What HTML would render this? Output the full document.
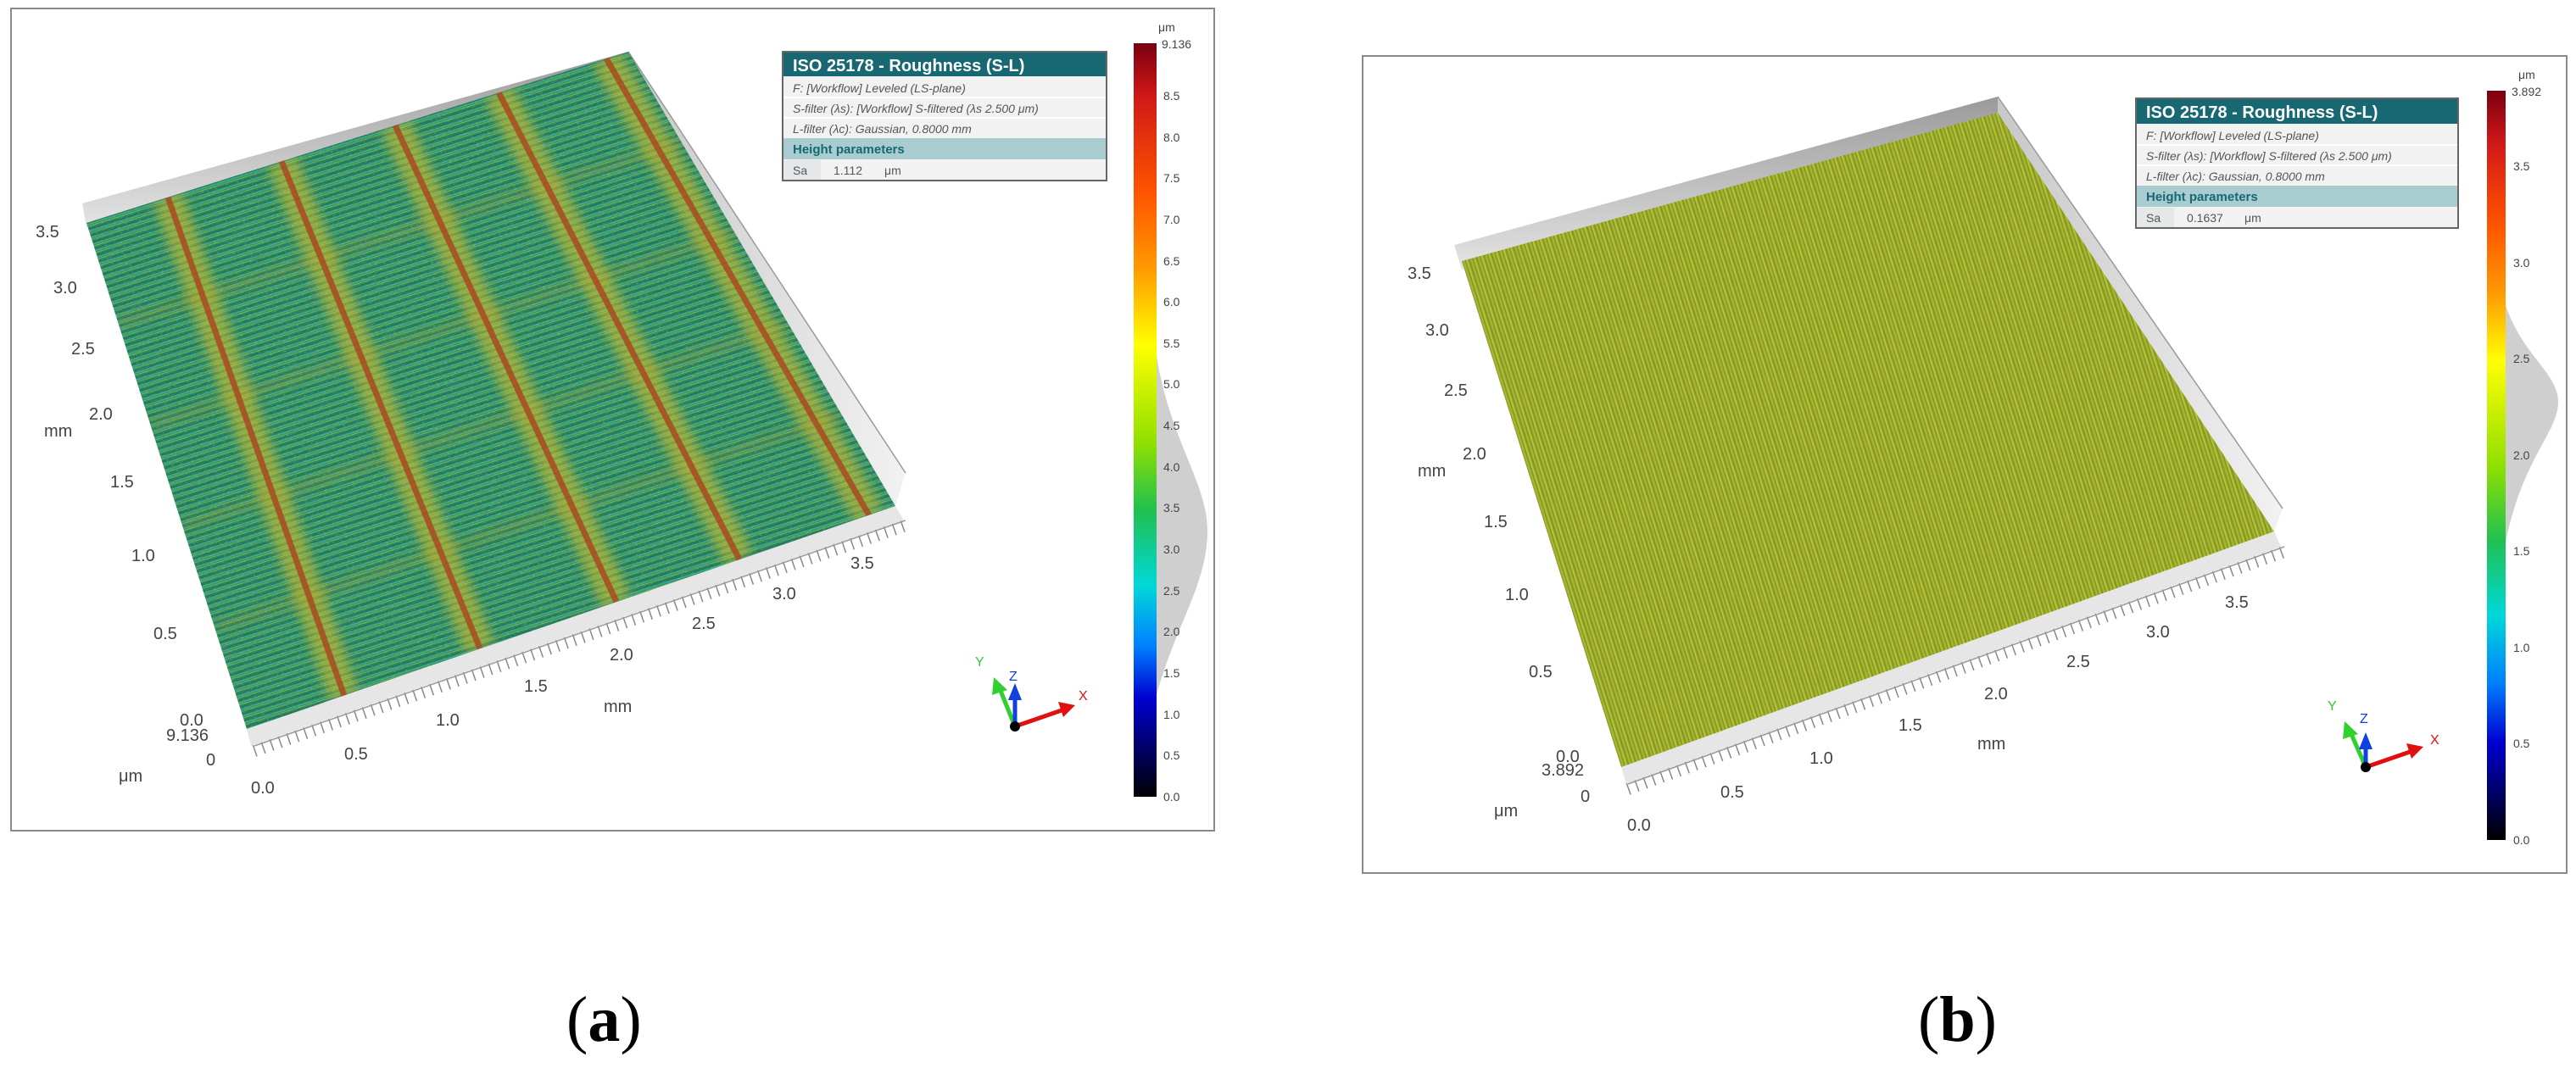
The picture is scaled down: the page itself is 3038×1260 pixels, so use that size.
<!DOCTYPE html>
<html><head><meta charset="utf-8"><style>
html,body{margin:0;padding:0;background:#fff;}
svg{display:block}
.ax{font-family:"Liberation Sans",sans-serif;font-size:20px;fill:#444}
.cb{font-family:"Liberation Sans",sans-serif;font-size:14px;fill:#444}
.sn{font-family:"Liberation Sans",sans-serif}
</style></head><body>
<svg width="3038" height="1260" viewBox="0 0 3038 1260" xmlns="http://www.w3.org/2000/svg">
<defs>
<linearGradient id="jetA" x1="0" y1="0" x2="0" y2="1">
<stop offset="0" stop-color="#7a0010"/><stop offset="0.07" stop-color="#d01818"/><stop offset="0.2" stop-color="#ff5500"/><stop offset="0.3" stop-color="#ff9a00"/><stop offset="0.4" stop-color="#ffff00"/><stop offset="0.53" stop-color="#90e000"/><stop offset="0.62" stop-color="#20c050"/><stop offset="0.72" stop-color="#00d8d8"/><stop offset="0.8" stop-color="#0080ff"/><stop offset="0.87" stop-color="#0000d0"/><stop offset="0.94" stop-color="#000060"/><stop offset="1" stop-color="#000"/>
</linearGradient>
<linearGradient id="jetB" x1="0" y1="0" x2="0" y2="1">
<stop offset="0" stop-color="#7a0010"/><stop offset="0.07" stop-color="#d01818"/><stop offset="0.18" stop-color="#ff5500"/><stop offset="0.27" stop-color="#ff9a00"/><stop offset="0.36" stop-color="#ffff00"/><stop offset="0.5" stop-color="#90e000"/><stop offset="0.6" stop-color="#20c050"/><stop offset="0.7" stop-color="#00d8d8"/><stop offset="0.79" stop-color="#0080ff"/><stop offset="0.87" stop-color="#0000d0"/><stop offset="0.94" stop-color="#000060"/><stop offset="1" stop-color="#000"/>
</linearGradient>
<linearGradient id="wall" x1="0" y1="0" x2="0" y2="1"><stop offset="0" stop-color="#9a9a9a"/><stop offset="1" stop-color="#e4e4e4"/></linearGradient>
<linearGradient id="wallR" x1="0" y1="0" x2="1" y2="0"><stop offset="0" stop-color="#c8c8c8"/><stop offset="1" stop-color="#f2f2f2"/></linearGradient>
<pattern id="strA" width="40" height="8" patternUnits="userSpaceOnUse" patternTransform="rotate(-17.5)">
<rect width="40" height="8" fill="#2a8a68"/><rect y="0" width="40" height="2" fill="#22765a"/><rect y="3" width="40" height="1.5" fill="#3cae90"/><rect y="5.5" width="40" height="1" fill="#78b840"/>
</pattern>
<pattern id="strB" width="9" height="40" patternUnits="userSpaceOnUse" patternTransform="rotate(-17.5)">
<rect width="9" height="40" fill="#9aa828"/><rect x="0" width="1.5" height="40" fill="#c0c832"/><rect x="3" width="1" height="40" fill="#7a8c22"/><rect x="5" width="1.5" height="40" fill="#b4b42c"/><rect x="7.5" width="0.7" height="40" fill="#4a9a40"/>
</pattern>
<clipPath id="clipA"><polygon points="102,263 741,61 1056,597 291,860"/></clipPath>
<clipPath id="clipB"><polygon points="1724,308 2356,133 2682,627 1912,905"/></clipPath>
<filter id="bl"><feGaussianBlur stdDeviation="6"/></filter>
<filter id="noiseA" x="0" y="0" width="100%" height="100%">
<feTurbulence type="fractalNoise" baseFrequency="0.04 0.35" numOctaves="3" seed="3"/>
<feColorMatrix type="matrix" values="0 0 0 0 0.05  0 0 0 0 0.25  0 0 0 0 0.2  1.6 0 0 0 -0.7"/>
</filter>
<filter id="noiseA2" x="0" y="0" width="100%" height="100%">
<feTurbulence type="fractalNoise" baseFrequency="0.3 0.6" numOctaves="2" seed="7"/>
<feColorMatrix type="matrix" values="0 0 0 0 0.6  0 0 0 0 0.85  0 0 0 0 0.3  1.8 0 0 0 -0.95"/>
</filter>
<filter id="noiseB" x="0" y="0" width="100%" height="100%">
<feTurbulence type="fractalNoise" baseFrequency="0.5 0.03" numOctaves="3" seed="5"/>
<feColorMatrix type="matrix" values="0 0 0 0 0.35  0 0 0 0 0.4  0 0 0 0 0.05  1.6 0 0 0 -0.75"/>
</filter>
</defs>

<!-- ===== Panel A ===== -->
<rect x="13" y="10" width="1419" height="970" fill="#fff" stroke="#8a8a8a" stroke-width="2"/>
<polygon points="97,240 741,61 741,100 102,268" fill="url(#wall)"/>
<polygon points="741,61 1068,558 1056,597 741,100" fill="url(#wallR)"/>
<line x1="741" y1="61" x2="1068" y2="558" stroke="#999" stroke-width="1.5"/>
<polygon points="291,860 1056,597 1066,614 296,880" fill="#e6e6e6"/>
<line x1="300" y1="886" x2="1068" y2="620" stroke="#888" stroke-width="14" stroke-dasharray="1.5 9"/>
<line x1="300" y1="880" x2="1068" y2="614" stroke="#999" stroke-width="1.5"/>
<g clip-path="url(#clipA)">
<rect x="90" y="50" width="980" height="820" fill="url(#strA)"/>
<g transform="rotate(-17.5 580 460)"><rect x="0" y="0" width="1200" height="1000" filter="url(#noiseA)" opacity="0.6"/></g>
<g transform="rotate(-17.5 580 460)"><rect x="0" y="0" width="1200" height="1000" filter="url(#noiseA2)" opacity="0.5"/></g>
<g stroke="#e6c020" stroke-width="36" opacity="0.5" filter="url(#bl)">
<line x1="198" y1="233" x2="406" y2="821"/><line x1="332" y1="190" x2="566" y2="765"/><line x1="466" y1="148" x2="727" y2="710"/><line x1="588" y1="109" x2="872" y2="660"/><line x1="715" y1="69" x2="1025" y2="608"/>
</g>
<g stroke="#c8a020" stroke-width="8" opacity="0.35" filter="url(#bl)">
<line x1="140" y1="382" x2="804" y2="168"/><line x1="178" y1="502" x2="867" y2="275"/><line x1="215" y1="621" x2="930" y2="383"/><line x1="253" y1="741" x2="993" y2="490"/>
</g>
<g stroke="#a84a22" stroke-width="7" opacity="0.85">
<line x1="198" y1="233" x2="406" y2="821"/><line x1="332" y1="190" x2="566" y2="765"/><line x1="466" y1="148" x2="727" y2="710"/><line x1="588" y1="109" x2="872" y2="660"/><line x1="715" y1="69" x2="1025" y2="608"/>
</g>
</g>
<g class="ax">
<text x="42" y="280">3.5</text><text x="63" y="346">3.0</text><text x="84" y="418">2.5</text><text x="105" y="495">2.0</text><text x="52" y="515">mm</text>
<text x="130" y="575">1.5</text><text x="155" y="662">1.0</text><text x="181" y="754">0.5</text><text x="212" y="856">0.0</text><text x="196" y="874">9.136</text><text x="243" y="903">0</text><text x="140" y="922">μm</text>
<text x="296" y="936">0.0</text><text x="406" y="896">0.5</text><text x="514" y="856">1.0</text><text x="618" y="816">1.5</text><text x="719" y="779">2.0</text><text x="816" y="742">2.5</text><text x="911" y="707">3.0</text><text x="1003" y="671">3.5</text><text x="712" y="840">mm</text>
</g>
<g transform="translate(923,61)" class="sn">
<rect width="382" height="152" fill="#f2f2f2" stroke="#666" stroke-width="2"/>
<rect x="1" y="1" width="380" height="28" fill="#176872"/>
<text x="12" y="23" font-size="20" font-weight="bold" fill="#fff">ISO 25178 - Roughness (S-L)</text>
<line x1="1" y1="54" x2="381" y2="54" stroke="#fff" stroke-width="2"/><line x1="1" y1="78" x2="381" y2="78" stroke="#fff" stroke-width="2"/>
<text x="12" y="48" font-size="14" font-style="italic" fill="#555">F: [Workflow] Leveled (LS-plane)</text>
<text x="12" y="72" font-size="14" font-style="italic" fill="#555">S-filter (λs): [Workflow] S-filtered (λs 2.500 μm)</text>
<text x="12" y="96" font-size="14" font-style="italic" fill="#555">L-filter (λc): Gaussian, 0.8000 mm</text>
<rect x="1" y="102" width="380" height="25" fill="#a8ccd0"/>
<text x="12" y="120" font-size="15" font-weight="bold" fill="#176872">Height parameters</text>
<rect x="1" y="128" width="44" height="23" fill="#e4e8e8"/>
<text x="12" y="145" font-size="14" fill="#555">Sa</text><text x="60" y="145" font-size="14" fill="#555">1.112</text><text x="120" y="145" font-size="14" fill="#555">μm</text>
</g>
<path d="M1364,420 C1380,520 1424,570 1424,626 C1424,690 1385,740 1364,820 Z" fill="#cfcfcf"/>
<rect x="1337" y="51" width="27" height="889" fill="url(#jetA)"/>
<text x="1366" y="37" class="cb">μm</text>
<g class="cb">
<text x="1370" y="57">9.136</text><text x="1372" y="118">8.5</text><text x="1372" y="167">8.0</text><text x="1372" y="215">7.5</text><text x="1372" y="264">7.0</text><text x="1372" y="313">6.5</text><text x="1372" y="361">6.0</text><text x="1372" y="410">5.5</text><text x="1372" y="458">5.0</text><text x="1372" y="507">4.5</text><text x="1372" y="556">4.0</text><text x="1372" y="604">3.5</text><text x="1372" y="653">3.0</text><text x="1372" y="702">2.5</text><text x="1372" y="750">2.0</text><text x="1372" y="799">1.5</text><text x="1372" y="848">1.0</text><text x="1372" y="896">0.5</text><text x="1372" y="945">0.0</text>
</g>
<line x1="1197" y1="857" x2="1255" y2="837" stroke="#e01010" stroke-width="5"/><polygon points="1268,832 1248,828 1254,846" fill="#e01010"/>
<line x1="1197" y1="857" x2="1180" y2="815" stroke="#30d030" stroke-width="5"/><polygon points="1172,799 1170,820 1188,814" fill="#30d030"/>
<line x1="1197" y1="857" x2="1197" y2="820" stroke="#1040e0" stroke-width="5"/><polygon points="1197,806 1189,826 1205,826" fill="#1040e0"/>
<circle cx="1197" cy="857" r="6" fill="#000"/>
<g class="sn" font-size="16"><text x="1272" y="826" fill="#e01010">X</text><text x="1190" y="803" fill="#1040e0">Z</text><text x="1150" y="786" fill="#30d030">Y</text></g>

<!-- ===== Panel B ===== -->
<rect x="1607" y="66" width="1420" height="964" fill="#fff" stroke="#8a8a8a" stroke-width="2"/>
<polygon points="1715,289 2356,114 2356,145 1724,318" fill="url(#wall)"/>
<polygon points="2356,114 2692,600 2682,627 2356,145" fill="url(#wallR)"/>
<line x1="2356" y1="114" x2="2692" y2="600" stroke="#999" stroke-width="1.5"/>
<polygon points="1912,905 2682,627 2690,645 1918,925" fill="#e6e6e6"/>
<line x1="1920" y1="931" x2="2694" y2="651" stroke="#888" stroke-width="14" stroke-dasharray="1.5 9"/>
<line x1="1920" y1="925" x2="2694" y2="645" stroke="#999" stroke-width="1.5"/>
<g clip-path="url(#clipB)">
<rect x="1700" y="120" width="1000" height="800" fill="url(#strB)"/>
<g transform="rotate(-17.5 2200 520)"><rect x="1600" y="0" width="1200" height="1050" filter="url(#noiseB)" opacity="0.6"/></g>
</g>
<g class="ax">
<text x="1660" y="329">3.5</text><text x="1681" y="396">3.0</text><text x="1703" y="467">2.5</text><text x="1725" y="542">2.0</text><text x="1672" y="562">mm</text>
<text x="1750" y="622">1.5</text><text x="1775" y="708">1.0</text><text x="1803" y="799">0.5</text><text x="1835" y="899">0.0</text><text x="1818" y="915">3.892</text><text x="1864" y="946">0</text><text x="1762" y="963">μm</text>
<text x="1919" y="980">0.0</text><text x="2029" y="941">0.5</text><text x="2134" y="901">1.0</text><text x="2239" y="862">1.5</text><text x="2340" y="825">2.0</text><text x="2437" y="787">2.5</text><text x="2531" y="752">3.0</text><text x="2624" y="717">3.5</text><text x="2332" y="884">mm</text>
</g>
<g transform="translate(2519,116)" class="sn">
<rect width="380" height="153" fill="#f2f2f2" stroke="#666" stroke-width="2"/>
<rect x="1" y="1" width="378" height="29" fill="#176872"/>
<text x="12" y="23" font-size="20" font-weight="bold" fill="#fff">ISO 25178 - Roughness (S-L)</text>
<line x1="1" y1="55" x2="379" y2="55" stroke="#fff" stroke-width="2"/><line x1="1" y1="79" x2="379" y2="79" stroke="#fff" stroke-width="2"/>
<text x="12" y="49" font-size="14" font-style="italic" fill="#555">F: [Workflow] Leveled (LS-plane)</text>
<text x="12" y="73" font-size="14" font-style="italic" fill="#555">S-filter (λs): [Workflow] S-filtered (λs 2.500 μm)</text>
<text x="12" y="97" font-size="14" font-style="italic" fill="#555">L-filter (λc): Gaussian, 0.8000 mm</text>
<rect x="1" y="103" width="378" height="25" fill="#a8ccd0"/>
<text x="12" y="121" font-size="15" font-weight="bold" fill="#176872">Height parameters</text>
<rect x="1" y="129" width="44" height="23" fill="#e4e8e8"/>
<text x="12" y="146" font-size="14" fill="#555">Sa</text><text x="60" y="146" font-size="14" fill="#555">0.1637</text><text x="128" y="146" font-size="14" fill="#555">μm</text>
</g>
<path d="M2955,360 C2975,420 3017,440 3017,474 C3017,510 2975,540 2955,640 Z" fill="#cfcfcf"/>
<rect x="2933" y="107" width="22" height="884" fill="url(#jetB)"/>
<text x="2970" y="93" class="cb">μm</text>
<g class="cb">
<text x="2962" y="113">3.892</text><text x="2964" y="201">3.5</text><text x="2964" y="315">3.0</text><text x="2964" y="428">2.5</text><text x="2964" y="542">2.0</text><text x="2964" y="655">1.5</text><text x="2964" y="769">1.0</text><text x="2964" y="882">0.5</text><text x="2964" y="996">0.0</text>
</g>
<line x1="2790" y1="905" x2="2845" y2="886" stroke="#e01010" stroke-width="5"/><polygon points="2858,881 2838,877 2844,895" fill="#e01010"/>
<line x1="2790" y1="905" x2="2773" y2="866" stroke="#30d030" stroke-width="5"/><polygon points="2765,851 2763,872 2781,866" fill="#30d030"/>
<line x1="2790" y1="905" x2="2790" y2="878" stroke="#1040e0" stroke-width="5"/><polygon points="2790,864 2782,884 2798,884" fill="#1040e0"/>
<circle cx="2790" cy="905" r="6" fill="#000"/>
<g class="sn" font-size="16"><text x="2866" y="878" fill="#e01010">X</text><text x="2783" y="853" fill="#1040e0">Z</text><text x="2745" y="838" fill="#30d030">Y</text></g>

<text x="668" y="1228" style="font-family:'Liberation Serif',serif;font-size:76px" fill="#000">(<tspan font-weight="bold">a</tspan>)</text>
<text x="2262" y="1228" style="font-family:'Liberation Serif',serif;font-size:76px" fill="#000">(<tspan font-weight="bold">b</tspan>)</text>
</svg>
</body></html>
